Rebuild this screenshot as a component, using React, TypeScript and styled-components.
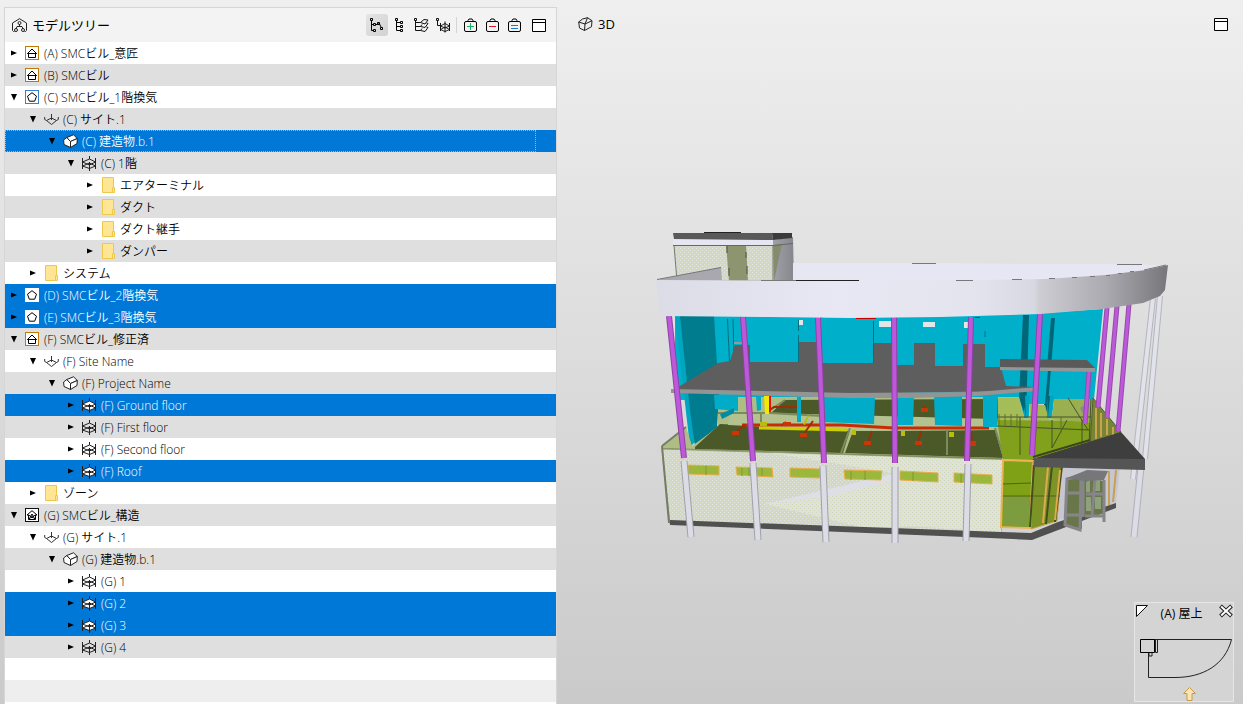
import React, { useState } from 'react';
import styled, { createGlobalStyle, css } from 'styled-components';

const GlobalStyle = createGlobalStyle`
  *, *::before, *::after { box-sizing: border-box; }
  body {
    margin: 0;
    font-family: 'Open Sans', 'Noto Sans CJK JP', sans-serif;
    font-size: 12px;
    line-height: 22px;
    color: #000;
  }
`;

const Page = styled.div`
  display: grid;
  grid-template-columns: minmax(320px, 553px) minmax(0, 1fr);
  min-height: 100vh;
  padding-left: 4px;
  background: linear-gradient(#efefef, #cacaca);
`;

const TreePanel = styled.section`
  display: flex;
  flex-direction: column;
  margin-top: 7px;
  border: 1px solid #d6d6d6;
  border-bottom: 0;
`;

const PanelHeader = styled.header`
  display: flex;
  align-items: center;
  justify-content: space-between;
  height: 34px;
  padding: 0 6px 0 7px;
  background: #f3f3f3;
`;

const Title = styled.h1`
  display: flex;
  align-items: center;
  gap: 5px;
  margin: 0;
  font-size: 13px;
  font-weight: 400;
`;

const Toolbar = styled.div`
  display: flex;
  align-items: center;
`;

const ToolButton = styled.button<{ $active?: boolean }>`
  display: grid;
  place-items: center;
  width: 22px;
  height: 22px;
  padding: 0;
  border: 0;
  border-radius: 3px;
  background: ${(p) => (p.$active ? 'linear-gradient(135deg, #e4e4e4, #d2d2d2)' : 'transparent')};
`;

const Divider = styled.span`
  width: 1px;
  height: 16px;
  margin: 0 2px;
  background: #d4d4d4;
`;

const WindowSlot = styled.span`
  padding-left: 3px;
`;

const Tree = styled.ul`
  margin: 0;
  padding: 0;
  list-style: none;
`;

const TreeRow = styled.li<{ $depth: number; $selected?: boolean; $focused?: boolean }>`
  position: relative;
  display: flex;
  align-items: center;
  height: 22px;
  padding-left: ${(p) => p.$depth * 19 + 2}px;
  background: #fff;
  white-space: nowrap;
  &:nth-child(even) { background: #dfdfdf; }
  ${(p) => p.$selected && css`
    && { background: #0078d7; color: #fff; }
  `}
  ${(p) => p.$focused && css`
    &::before {
      content: '';
      position: absolute;
      inset: 0 20px 0 0;
      border: 1px dotted #ff9d4a;
      pointer-events: none;
    }
  `}
`;

const Toggle = styled.button`
  display: grid;
  place-items: center;
  width: 14px;
  height: 22px;
  padding: 0;
  border: 0;
  background: transparent;
`;

const IconSlot = styled.span`
  display: grid;
  place-items: center;
  width: 16px;
  height: 16px;
  margin: 0 4px 0 3px;
`;

const Label = styled.span`
  padding-top: 2px;
  font-weight: 350;
`;

const EmptyRows = styled.div`
  flex: 1;
  background: repeating-linear-gradient(#fff 0 22px, #eee 22px 44px);
`;

const Viewer = styled.section`
  position: relative;
  display: flex;
  flex-direction: column;
`;

const ViewerHeader = styled.header`
  display: flex;
  align-items: center;
  justify-content: space-between;
  height: 48px;
  padding: 0 11px 0 21px;
`;

const Scene = styled.svg`
  flex: 1;
  width: 100%;
  min-height: 0;
`;

const MiniMap = styled.aside`
  position: absolute;
  right: 9px;
  bottom: 2px;
  width: 100px;
  border: 1px solid #e6e6e6;
  background: #d4d4d4;
`;

const MiniMapHeader = styled.div`
  display: grid;
  grid-template-columns: 15px 1fr 14px;
  height: 34px;
`;

const MiniMapTitle = styled.span`
  padding-right: 6px;
  line-height: 22px;
  text-align: center;
`;

const MiniMapButton = styled.button`
  display: block;
  height: 16px;
  padding: 1px 0;
  border: 0;
  background: transparent;
`;

const MiniMapPlan = styled.svg`
  display: block;
  width: 100%;
  height: 64px;
`;

type Kind = 'arch' | 'mep' | 'struct' | 'site' | 'building' | 'floor' | 'folder';

const TreeIcon = () => (
  <svg width="15" height="15" viewBox="0 0 15 15" fill="none" stroke="#222">
    <path d="M2.500 13.500h-1l-1-1V5L7.500.7 14.500 5v7.500l-1 1h-1" />
    <path d="M7.500 6v2M4 11l1-2.500h5L11 11" />
    <circle cx="7.500" cy="5" r="1.500" /><circle cx="4" cy="12" r="1.500" /><circle cx="11" cy="12" r="1.500" />
  </svg>
);

const NodeTreeIcon = () => (
  <svg width="14" height="15" viewBox="0 0 14 15" fill="none" stroke="#000">
    <path d="M1.500 3v9.500h2M1.500 6.500h2M5.500 6.500h2l1-1M9.500 6l2 4" />
    <path d="M.5.500h2v2h-2zM3.500 5.500h2v2h-2zM3.500 11.500h2v2h-2zM7.500 4.500h2v2h-2zM10.500 9.500h2v2h-2z" />
  </svg>
);

const ListTreeIcon = () => (
  <svg width="14" height="15" viewBox="0 0 14 15" fill="none" stroke="#000">
    <path d="M4.500 3v9.500h4M4.500 4.500h4M4.500 8.500h4" />
    <path d="M3.500.500h2v2h-2zM8.500 3.500h2v2h-2zM8.500 7.500h2v2h-2zM8.500 11.500h2v2h-2z" />
  </svg>
);

const LayersTreeIcon = () => (
  <svg width="15" height="15" viewBox="0 0 15 15" fill="none" stroke="#111">
    <path d="M1.500 3v9.500h5M1.500 4.500h5M1.500 8.500h5M.5.500h2v2h-2z" />
    <path d="M6.500 4.500l3.500-3 4 .5-3 4zM6.500 8.500l1.500-2M11 9.500l3-4-1.500-.5M6.500 8.500l4.500 1M6.500 12.500l1.500-2M11 13.500l3-4-1.500-.5M6.500 12.500l4.500 1" />
  </svg>
);

const FloorTreeIcon = () => (
  <svg width="14" height="15" viewBox="0 0 14 15" fill="none" stroke="#111">
    <path d="M1.500 3v4.500h3M.5.500h2v2h-2z" />
    <path d="M4.500 5v8M13.500 5v8M9 3.500V14.500" />
    <path d="M4.500 8L9 5.500 13.500 8 9 10zM4.500 11.500L9 9l4.500 2.500L9 13.500z" strokeWidth=".9" />
  </svg>
);

const BagIcon = ({ mark }: { mark: 'plus' | 'minus' | 'equals' }) => (
  <svg width="13" height="15" viewBox="0 0 13 15" fill="none" stroke="#000">
    <path d="M4 3.500v-1l1-1.500h3l1 1.500v1" />
    <rect x=".5" y="3.500" width="12" height="10" rx="1.500" />
    {mark === 'plus' && <path d="M3 8.500h7M6.500 5v7" stroke="#12b45e" />}
    {mark === 'minus' && <path d="M3 8.500h7" stroke="#e81123" />}
    {mark === 'equals' && <path d="M3 7.500h7M3 10.500h7" stroke="#1f7ac8" />}
  </svg>
);

const WindowIcon = () => (
  <svg width="14" height="13" viewBox="0 0 14 13" fill="#fff" stroke="#000">
    <path d="M.5.500h13v12H.5zM.5 3.500h13" />
  </svg>
);

const CubeIcon = () => (
  <svg width="15" height="15" viewBox="0 0 15 15" fill="none" stroke="#222" strokeLinejoin="round">
    <path d="M.7 5L4.500 2 9.500.7l4.500 3-.5 6L6.500 13.500 1.500 11z" />
    <path d="M.7 5l6.300 2-.5 6.500M7 7l7-3.300M9.500.7L7 7" />
  </svg>
);

const ModelIcon = ({ kind, selected }: { kind: 'arch' | 'mep' | 'struct'; selected?: boolean }) => {
  const frame = { arch: '#c07a0c', mep: selected ? '#fff' : '#3b7fd0', struct: '#111' }[kind];
  return (
    <svg width="14" height="14" viewBox="0 0 14 14" fill="#fff" stroke="#000">
      <rect x=".5" y=".5" width="13" height="13" stroke={frame} />
      {kind === 'mep' && <path d="M7 2.700l4.500 3.500-1.800 5H4.300l-1.800-5z" />}
      {kind === 'arch' && <path d="M7 3L2.500 7.500h1v4h7v-4h1zM2.500 7.500h9" />}
      {kind === 'struct' && <path d="M7 2.700L2 7h1.500v4.500h7V7H12zM4 11.500L7 6l3 5.500M3.500 7l5 3M10.500 7l-5 3" />}
    </svg>
  );
};

const SiteIcon = () => (
  <svg width="15" height="14" viewBox="0 0 15 14" fill="none" stroke="#333">
    <path d="M2.500 8.500l5-2.500 5 2.500-5 4z" />
    <path d="M.7 5v2.500l1.800 1M14.300 5v2.500l-1.800 1M7.500 2v6" />
  </svg>
);

const BuildingIcon = () => (
  <svg width="15" height="15" viewBox="0 0 15 15" fill="#fff" stroke="#222" strokeLinejoin="round">
    <path d="M.6 6l3.200-2.500 3.700 4v6L1 10.500z" />
    <path d="M3.800 3.500l6.700-2.700L14.300 4.500 7.500 7.500z" />
    <path d="M14.300 4.500L14 9.500l-6.500 4v-6z" />
  </svg>
);

const FloorIcon = ({ selected }: { selected?: boolean }) => (
  <svg width="15" height="15" viewBox="0 0 15 15" fill="none" stroke="#222">
    <path d="M.5 6L7.500 3l6 3v4l-6 2.500L.5 10z" fill={selected ? '#fff' : 'none'} stroke="none" />
    <path d="M.5 2v11M13.500 2v11M7.500 0v3M7.500 6V15" />
    <path d="M.5 6l7-3 6 3-6 3zM.5 10l7-3 6 3-6 2.500z" />
  </svg>
);

const FolderIcon = () => (
  <svg width="14" height="16" viewBox="0 0 14 16" fill="#ffe594" stroke="#edc84b">
    <path d="M1.500.500h11v15h-11z" /><path d="M11.500 10.500h2v5h-2z" />
  </svg>
);

const NodeIcon = ({ kind, selected }: { kind: Kind; selected?: boolean }) => {
  switch (kind) {
    case 'site': return <SiteIcon />;
    case 'building': return <BuildingIcon />;
    case 'floor': return <FloorIcon selected={selected} />;
    case 'folder': return <FolderIcon />;
    default: return <ModelIcon kind={kind} selected={selected} />;
  }
};

const Arrow = ({ open }: { open?: boolean }) => (
  <svg width="8" height="8" viewBox="0 0 8 8">
    <path d={open ? 'M1 1h6L4 7.500z' : 'M1 1.500v5L7 4z'} />
  </svg>
);

interface Item { depth: number; kind: Kind; label: string; open?: boolean; }

const items: Item[] = [
  { depth: 0, kind: 'arch', label: '(A) SMCビル_意匠' },
  { depth: 0, kind: 'arch', label: '(B) SMCビル' },
  { depth: 0, kind: 'mep', label: '(C) SMCビル_1階換気', open: true },
  { depth: 1, kind: 'site', label: '(C) サイト.1', open: true },
  { depth: 2, kind: 'building', label: '(C) 建造物.b.1', open: true },
  { depth: 3, kind: 'floor', label: '(C) 1階', open: true },
  { depth: 4, kind: 'folder', label: 'エアターミナル' },
  { depth: 4, kind: 'folder', label: 'ダクト' },
  { depth: 4, kind: 'folder', label: 'ダクト継手' },
  { depth: 4, kind: 'folder', label: 'ダンパー' },
  { depth: 1, kind: 'folder', label: 'システム' },
  { depth: 0, kind: 'mep', label: '(D) SMCビル_2階換気' },
  { depth: 0, kind: 'mep', label: '(E) SMCビル_3階換気' },
  { depth: 0, kind: 'arch', label: '(F) SMCビル_修正済', open: true },
  { depth: 1, kind: 'site', label: '(F) Site Name', open: true },
  { depth: 2, kind: 'building', label: '(F) Project Name', open: true },
  { depth: 3, kind: 'floor', label: '(F) Ground floor' },
  { depth: 3, kind: 'floor', label: '(F) First floor' },
  { depth: 3, kind: 'floor', label: '(F) Second floor' },
  { depth: 3, kind: 'floor', label: '(F) Roof' },
  { depth: 1, kind: 'folder', label: 'ゾーン' },
  { depth: 0, kind: 'struct', label: '(G) SMCビル_構造', open: true },
  { depth: 1, kind: 'site', label: '(G) サイト.1', open: true },
  { depth: 2, kind: 'building', label: '(G) 建造物.b.1', open: true },
  { depth: 3, kind: 'floor', label: '(G) 1' },
  { depth: 3, kind: 'floor', label: '(G) 2' },
  { depth: 3, kind: 'floor', label: '(G) 3' },
  { depth: 3, kind: 'floor', label: '(G) 4' },
];

const initialSelection = [4, 11, 12, 16, 19, 25, 26];

type Line = [number, number, number, number];

const purpleColumns: Line[] = [
  [669, 316, 684, 458], [743, 317, 753, 461], [818, 318, 824, 463], [894, 318, 895, 463],
  [971, 317, 967, 461], [1040, 314, 1032, 455],
];
const slimColumns: Line[] = [
  [1107, 308, 1098, 407], [1117, 306, 1107, 418], [1129, 304, 1118, 431], [1089, 372, 1085, 424],
];
const baseColumns: Line[] = [
  [684, 461, 691, 537], [753, 463, 758, 540], [823, 466, 826, 542], [895, 467, 895, 543], [968, 464, 966, 541],
];
const windows: string[] = [
  '688,465 719,466 719,475 688,474', '736,467 772,468 773,477 737,475', '790,468 820,469 820,478 790,477',
  '844,470 882,471 881,480 845,479', '900,471 938,473 938,482 900,480', '954,473 992,475 992,484 954,482',
];

const Column = ({ line: [x1, y1, x2, y2], width, color, shade }: { line: Line; width: number; color: string; shade: string }) => (
  <g>
    <line x1={x1} y1={y1} x2={x2} y2={y2} stroke={shade} strokeWidth={width} />
    <line x1={x1} y1={y1} x2={x2} y2={y2} stroke={color} strokeWidth={width - 2} />
  </g>
);

const Poly = ({ p, ...rest }: { p: string } & React.SVGProps<SVGPolygonElement>) => <polygon points={p} {...rest} />;

const BuildingScene = () => (
  <Scene viewBox="557 48 686 656" role="img" aria-label="3D">
    <defs>
      <pattern id="mesh" width="4" height="4" patternUnits="userSpaceOnUse">
        <rect width="4" height="4" fill="#d2dab8" />
        <path d="M0 0h1v1H0zM2 2h1v1H2z" fill="#e2e2ea" />
      </pattern>
      <pattern id="meshLight" width="4" height="4" patternUnits="userSpaceOnUse">
        <rect width="4" height="4" fill="#dfdfe6" />
        <path d="M0 0h1v1H0zM2 2h1v1H2z" fill="#cfd8ae" />
      </pattern>
      <linearGradient id="band" gradientUnits="userSpaceOnUse" x1="656" y1="0" x2="1167" y2="0">
        <stop offset="0" stopColor="#dcdce7" /><stop offset=".35" stopColor="#e8e8f4" />
        <stop offset=".62" stopColor="#e4e4ee" /><stop offset=".74" stopColor="#d8d8e2" />
        <stop offset=".75" stopColor="#cdcdd3" /><stop offset=".88" stopColor="#aaaab0" />
        <stop offset="1" stopColor="#77777b" />
      </linearGradient>
      <linearGradient id="side" x1="0" y1="0" x2="1" y2="0">
        <stop offset="0" stopColor="#a0a0a8" /><stop offset="1" stopColor="#86868d" />
      </linearGradient>
    </defs>

    <Poly p="674,245 773,244 773,281 677,281" fill="url(#mesh)" stroke="#77776f" />
    <Poly p="726,244 746,244 748,281 729,281" fill="#8c9470" />
    <path d="M727 245v8M729 268v8M746 252v6M747 266v8" stroke="#4d553a" />
    <Poly p="773,240 793,237 794,281 773,281" fill="url(#side)" />
    <Poly p="773,245 782,244 774,281" fill="#858b6d" />
    <Poly p="673,239 773,239 773,245 673,245" fill="#e6e6f3" />
    <path d="M673 245.500h100l20-2" stroke="#66666a" fill="none" />
    <Poly p="673,233 772,233 773,240 674,239" fill="#595959" />
    <Poly p="772,233 792,233 792,238 773,240" fill="#3b3b3b" />
    <path d="M704 232.500h37" stroke="#222" />
    <Poly p="657,280 721,267 722,281 657,281" fill="#a8a8ae" />
    <path d="M657 279.500l64-12" stroke="#77777b" />

    <Poly p="675,315 850,317 1040,313 1103,309 1094,399 1054,399 1052,418 1044,418 1044,399 1029,399 1029,418 1024,418 1019,398 675,400" fill="#00b0cb" />
    <Poly p="675,316 681,316 697,440 690,447" fill="#00a5bf" />
    <Poly p="680,316 714,316 719,396 717,427 695,446 690,410" fill="#007c8f" />
    <path d="M727.500 319l2 43M733 319l1 36M798.500 320v11M798.500 335v28M873.500 321v42M985 331v6" stroke="#006f80" />
    <path d="M799 320h4v5h-4zM879 321h13v6h-13zM923 322h12v5h-12zM964 322h5v6h-5z" fill="#e3e6e8" />
    <path d="M820 317.500h3M856 318.500h20M975 317.500h5" stroke="#c00" />
    <Poly p="1023,315 1029,315 1026,418 1019,398" fill="#006778" />
    <Poly p="1051,318 1055,318 1047,418 1044,405" fill="#006778" />
    <Poly p="1029,372 1048,370 1045,404 1029,404" fill="#00b0cb" />
    <path d="M675 389L718 363L730 361L735 345H750V362H799V342H817V363H874V343H897V365H914V343H935V366H963V344H985V367H1001L1006 386L1037 387V390L850 394L675 391Z" fill="#5e5e5e" />
    <path d="M734 342h8v2h-8z" fill="#999" />
    <Poly p="1000,359 1087,360 1095,368 1000,368" fill="#5a5a5a" />
    <Poly p="1000,367 1095,368 1095,372 1000,370" fill="#969696" />

    <Poly p="662,446 686,427 692,446 718,427 718,397 1019,397 1024,416 1052,418 1054,399 1093,399 1121,432 1033,461 662,449" fill="#aebd83" />
    <Poly p="695,447 720,424 850,430 843,453 695,449" fill="#4b5827" />
    <Poly p="785,400 1000,399 997,424 770,414" fill="#4b5827" />
    <Poly p="853,431 995,430 1003,458 845,453" fill="#4b5827" />
    <Poly p="730,414 770,413 995,419 996,430 850,431 728,425" fill="#b4c190" />
    <path d="M662 449l340 10M718 413l52 0 70 4M761 413v11M785 400l-18 12M850 428l-9 25M895 430v24M947 430v25M995 428l9 30" stroke="#7d8a5c" fill="none" strokeWidth="2" />
    <path d="M742 425h100l52 3h95" stroke="#c62d05" strokeWidth="3" fill="none" />
    <path d="M759 428l88 2" stroke="#cdd000" strokeWidth="3" />
    <path d="M735 433l10-8M803 435l10-14M868 443l4-12M918 443l3-12M972 443l-1-11M768 411l6-4h25M924 412v-6M782 425l4-3" stroke="#9c2d05" strokeWidth="2" fill="none" />
    <path d="M732 431h7v4h-7zM800 433h7v4h-7zM864 441h7v4h-7zM915 441h7v4h-7zM969 441h7v5h-7zM921 408h7v4h-7zM783 422h8v4h-8z" fill="#cb3606" />
    <path d="M760 422h7v4h-7zM852 430h4v5h-4zM901 431h4v5h-4zM949 432h5v5h-5zM803 424l5-9 1 1-4 9z" fill="#b7bd08" />
    <path d="M764 396h5v18h-4z" fill="#f5e900" /><path d="M769 396h2v16h-2z" fill="#d11" />
    <g fill="#00acc7">
      <path d="M714 395h24v16l-23-2zM756 396h5v14l-4 1zM797 397h4v25h-4zM823 397h52l-1 27-51-2zM897 397h17l-1 28h-15zM934 396h28v30l-27-1zM983 393h15l-1 34h-14z" />
      <path d="M720 414l14-6v5l-12 6z" fill="#008da2" />
    </g>

    <Poly p="998,398 1019,398 1024,420 998,420" fill="#a5bd59" />
    <Poly p="997,420 1092,421 1090,446 1033,460 1003,459" fill="#81a01c" />
    <Poly p="1054,399 1093,399 1091,423 1052,419" fill="#9ab050" />
    <Poly p="1029,404 1045,405 1049,420 1030,420" fill="#a3ba50" />
    <path d="M1024 396l6-1-2 23h-4zM1047 396h7l-3 22h-4z" fill="#00a5bf" />
    <path d="M1022 396h3l1 21zM1047 396h3l-2 21z" fill="#006778" />
    <path d="M997 417h94M997 426l93 4M1020 417v38M1052 420v28M1068 398l20 32M1091 399l-2 45M1082 420v26M1067 420l-15 28" stroke="#45522a" fill="none" />
    <path d="M999 414v12M1005 414v12M1011 414v12M1017 414v12M1036 417v16M1061 417v16" stroke="#627031" />
    <path d="M1033 457l57-17M1033 460l60-18" stroke="#3c451f" strokeWidth="2" />
    <Poly p="1093,398 1121,432 1090,446" fill="#788435" stroke="#555d36" />
    <path d="M1096 408v31M1101 413v24M1107 419v16M1113 427v9" stroke="#c9a44d" strokeWidth="2" />
    <Poly p="1080,408 1087,403 1086,420" fill="#888b8b" />

    <Poly p="662,449 1003,460 1001,533 670,524" fill="url(#mesh)" stroke="#95a078" />
    <Poly p="765,504 850,486 905,470 1003,464 1001,532 910,526 865,528" fill="url(#meshLight)" />
    <Poly p="770,453 1003,460 1003,470 900,474" fill="url(#meshLight)" />
    <Poly p="765,504 905,471 895,480 830,496" fill="#dedee6" />
    <path d="M662 446l7 77M662 446l24-19" stroke="#767c67" strokeWidth="2" />
    <Poly p="1060,467 1120,468 1116,503 1058,520" fill="#c7c7d1" />
    {windows.map((p) => <Poly key={p} p={p} fill="#9bb83d" stroke="#e9ac4a" />)}
    <path d="M706 466v9M742 468v8M749 468v8M762 468v8M851 471v9M865 471v9M913 472v9M961 474v9" stroke="#7a9a30" />
    <Poly p="1003,460 1033,461 1030,528 1001,527" fill="#7fa116" stroke="#efb25a" strokeWidth="2" />
    <Poly p="1033,461 1062,467 1057,521 1031,529" fill="#7c9425" stroke="#c9a049" />
    <path d="M1003 484l28-1M1003 496h57" stroke="#4f631e" />
    <Poly p="1004,497 1030,497 1028,527 1003,526" fill="#7d9c40" />
    <path d="M1034 465l-4 62M1052 466l-6 58M1062 466l-7 56" stroke="#41501f" strokeWidth="2" />
    <path d="M1048 467l-5 56M1060 470l-5 50" stroke="#e0a851" strokeWidth="2" />
    <Poly p="670,520 1001,532 1031,533 1058,522 1116,503 1116,508 1032,540 990,538 670,525" fill="#505050" />
    <Poly p="1066,480 1081,475 1103,481 1103,514 1082,517 1082,529 1065,525" fill="#68764a" />
    <path d="M1086 482l4-2v12h-4zM1094 480h6v11h-6zM1086 497h5v14h-5zM1095 497h6v12h-6z" fill="#8ea17a" />
    <path d="M1067 479l14-3-1 54-15-5zM1066 493h15M1066 515h16M1083 481v36M1086 494h18M1085 516h19M1104 480v42M1095 478l-3 38" stroke="#85858a" strokeWidth="3" fill="none" />
    <Poly p="1067,478 1087,470 1108,471 1104,480 1084,481" fill="#77777a" />
    <path d="M1109 471v34M1116 470l-3 32" stroke="#c7a050" strokeWidth="2" />

    {[[1153, 298, 1133, 479], [1160, 296, 1145, 459]].map((l) => (
      <Column key={l[0]} line={l as Line} width={6} color="#e2e2eb" shade="#b4b4bc" />
    ))}
    <Column line={[1141, 467, 1134, 537]} width={7} color="#dcdce6" shade="#b0b0b8" />
    {slimColumns.map((l) => <Column key={l[0]} line={l} width={5} color="#bd58db" shade="#954aaa" />)}
    <Poly p="1034,459 1121,432 1145,459" fill="#3e3e3e" />
    <Poly p="1034,458 1145,459 1145,470 1034,467" fill="#555" />
    <Poly p="671,389 850,393 977,392 1037,387 1037,391 977,396 910,398 850,398 671,393" fill="#949494" />
    {purpleColumns.map((l) => <Column key={l[0]} line={l} width={6} color="#bd58db" shade="#8d43a3" />)}
    {baseColumns.map((l) => <Column key={l[0]} line={l} width={7} color="#dcdce6" shade="#a0a0a8" />)}

    <path d="M793 263L912 263L1040 264L1135 264L1167 266L1040 290L793 290Z" fill="#e7e7f3" />
    <path d="M656 280L860 281L973 280L1046 279L1106 275L1146 270L1168 265L1165 290L1160 296L1143 303L1102 309L1040 314L940 317L850 318L770 317L660 316Z" fill="url(#band)" />
    <path d="M761 280.500h35M912 263.500h24M956 280.500h17M1012 279.500h10M1117 264.500h25M1049 278.500h6M1072 277.500h5M1090 276.500h5M1106 275.500h4M1118 273.500h4M1130 271.500h4M1144 270l22-5" stroke="#78787c" fill="none" />
    <path d="M796 280.500h63" stroke="#222" />
  </Scene>
);

export default function App() {
  const [selected, setSelected] = useState<number[]>(initialSelection);

  return (
    <>
      <GlobalStyle />
      <Page>
        <TreePanel>
          <PanelHeader>
            <Title><TreeIcon />モデルツリー</Title>
            <Toolbar>
              <ToolButton $active aria-label="階層"><NodeTreeIcon /></ToolButton>
              <ToolButton aria-label="リスト"><ListTreeIcon /></ToolButton>
              <ToolButton aria-label="レイヤー"><LayersTreeIcon /></ToolButton>
              <ToolButton aria-label="階"><FloorTreeIcon /></ToolButton>
              <Divider />
              <ToolButton aria-label="追加"><BagIcon mark="plus" /></ToolButton>
              <ToolButton aria-label="削除"><BagIcon mark="minus" /></ToolButton>
              <ToolButton aria-label="設定"><BagIcon mark="equals" /></ToolButton>
              <WindowSlot><ToolButton aria-label="ウィンドウ"><WindowIcon /></ToolButton></WindowSlot>
            </Toolbar>
          </PanelHeader>
          <Tree role="tree">
            {items.map((item, i) => {
              const on = selected.includes(i);
              return (
                <TreeRow
                  key={i}
                  role="treeitem"
                  aria-level={item.depth + 1}
                  aria-expanded={!!item.open}
                  aria-selected={on}
                  $depth={item.depth}
                  $selected={on}
                  $focused={i === 4}
                  onClick={() => setSelected([i])}
                >
                  <Toggle aria-label={item.label}><Arrow open={item.open} /></Toggle>
                  <IconSlot><NodeIcon kind={item.kind} selected={on} /></IconSlot>
                  <Label>{item.label}</Label>
                </TreeRow>
              );
            })}
          </Tree>
          <EmptyRows />
        </TreePanel>
        <Viewer>
          <ViewerHeader>
            <Title as="h2"><CubeIcon />3D</Title>
            <ToolButton aria-label="ウィンドウ"><WindowIcon /></ToolButton>
          </ViewerHeader>
          <BuildingScene />
          <MiniMap>
            <MiniMapHeader>
              <MiniMapButton aria-label="サイズ変更">
                <svg width="15" height="14" viewBox="0 0 15 14"><path d="M1.500 1.500h11l-11 11z" fill="#fff" stroke="#111" /></svg>
              </MiniMapButton>
              <MiniMapTitle>(A) 屋上</MiniMapTitle>
              <MiniMapButton aria-label="閉じる">
                <svg width="14" height="14" viewBox="0 0 14 14"><path d="M1.500 2l11 10M12.500 2L1.500 12" stroke="#222" strokeWidth="4" /><path d="M2.200 2.600l9.600 8.800M11.800 2.600l-9.600 8.800" stroke="#fff" strokeWidth="2" /></svg>
              </MiniMapButton>
            </MiniMapHeader>
            <MiniMapPlan viewBox="0 34 98 64" fill="none" stroke="#222">
              <path d="M18 36.500h78.500C90 62 68 74.500 40 74.500H13.500V50" />
              <path d="M5.500 36.500h14v13h-14z" stroke="#000" /><path d="M20.500 36.500h2v13h-2zM14 50v3h3v-3" />
              <path d="M54.500 84.500l6 6h-3.500v7h-5v-7h-3.500z" fill="#fbe5b5" stroke="#c99a45" />
            </MiniMapPlan>
          </MiniMap>
        </Viewer>
      </Page>
    </>
  );
}
